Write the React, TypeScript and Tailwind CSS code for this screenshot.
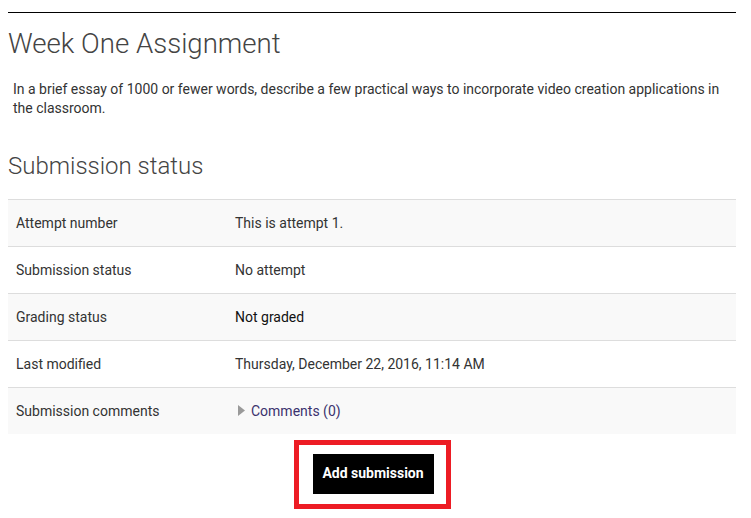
const rows: { label: string; value: React.ReactNode }[] = [
  { label: "Attempt number", value: "This is attempt 1." },
  { label: "Submission status", value: "No attempt" },
  { label: "Grading status", value: <span className="text-[#111]">Not graded</span> },
  { label: "Last modified", value: "Thursday, December 22, 2016, 11:14 AM" },
  {
    label: "Submission comments",
    value: (
      <a href="#" className="flex items-center gap-[6px] pl-[3px] text-[#3b326e]">
        <svg width="7" height="11" viewBox="0 0 7 11" className="shrink-0">
          <path d="M0 0 L7 5.5 L0 11 Z" fill="#9a9a9a" />
        </svg>
        Comments (0)
      </a>
    ),
  },
];

export default function App() {
  return (
    <div className="min-h-[518px] bg-white pt-3 pl-2 pr-[15px] font-['Roboto',sans-serif] text-[#333]">
      {/* divider */}
      <div className="h-px bg-black" />

      <h2 className="mt-[14px] text-[27.6px] leading-[34px] font-light text-[#444]">
        Week One Assignment
      </h2>

      <p className="mt-[19px] pl-[5px] text-[14px] leading-[19px]">
        In a brief essay of 1000 or fewer words, describe a few practical ways to incorporate video
        creation applications in the classroom.
      </p>

      <h3 className="mt-[34px] text-[24px] leading-[1.2] font-light text-[#444]">
        Submission status
      </h3>

      {/* status table */}
      <div className="mt-[18px]">
        {rows.map((r, i) => (
          <div
            key={r.label}
            className={`grid grid-cols-[219px_1fr] border-t border-[#dddddd] text-[14px] leading-5 ${
              i % 2 === 0 ? "bg-[#f9f9f9]" : "bg-white"
            }`}
          >
            <div className="px-2 py-[13px]">{r.label}</div>
            <div className="px-2 py-[13px]">{r.value}</div>
          </div>
        ))}
      </div>

      {/* action */}
      <div className="mt-[6px] flex justify-center">
        <div className="border-[5px] border-[#ed1c24] pt-[9px] pr-[12px] pb-[10px] pl-[14px]">
          <button className="h-10 w-[121px] bg-black text-[14px] font-bold text-white">
            Add submission
          </button>
        </div>
      </div>
    </div>
  );
}
